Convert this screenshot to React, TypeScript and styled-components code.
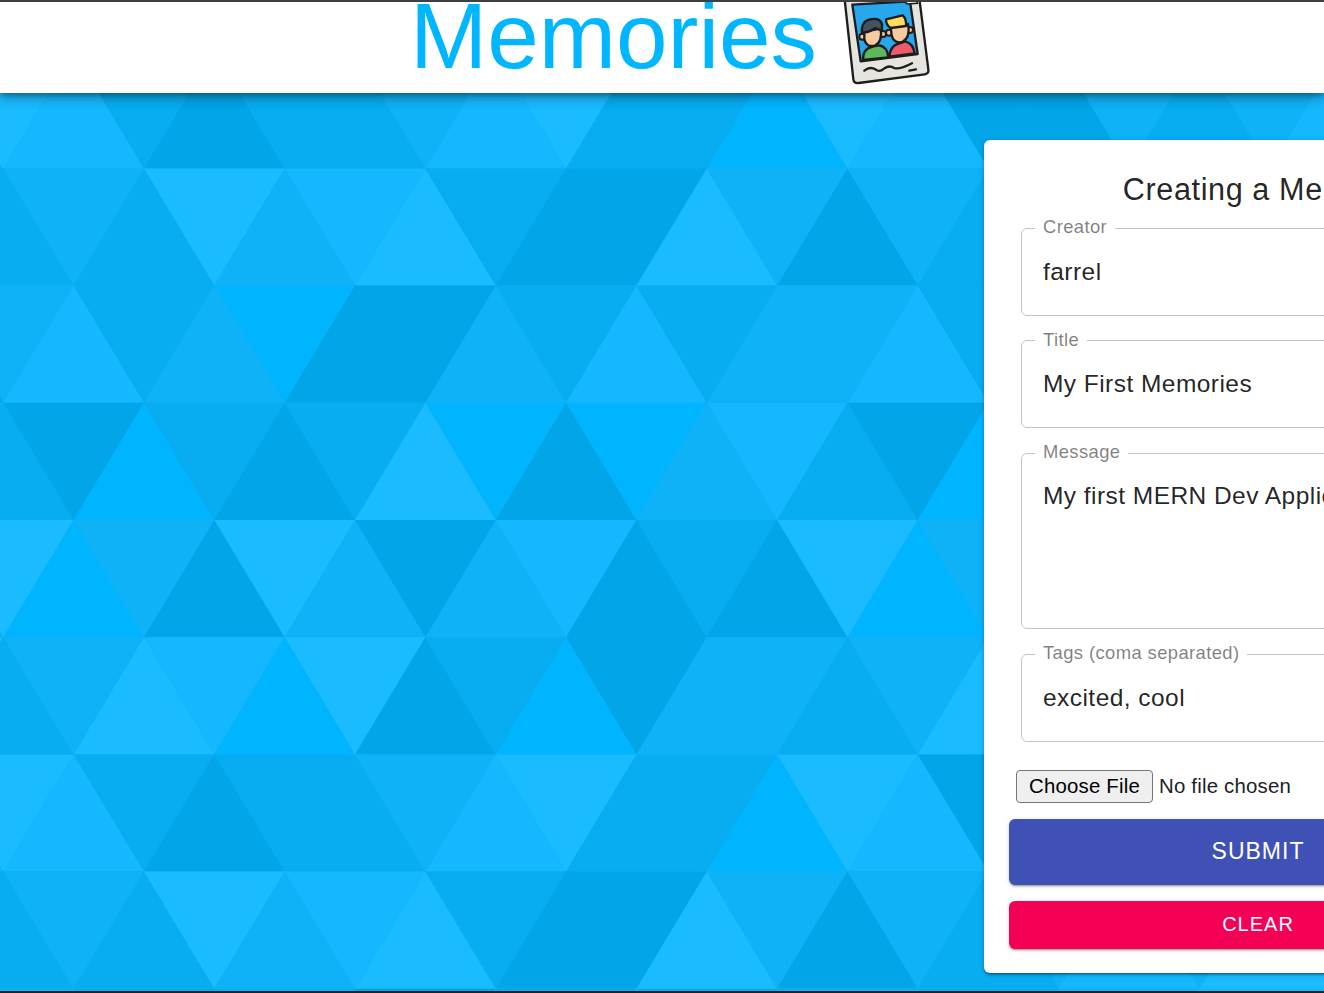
import React from "react";
import styled, { createGlobalStyle } from "styled-components";

const GlobalStyle = createGlobalStyle`
    html, body {
        margin: 0;
        padding: 0;
        background: #202124;
        overflow: hidden;
    }
`
const FONT = `"Liberation Sans", Arial, sans-serif`

// colours of the triangle texture, from light to dark
const palette: { [k: string]: string } = {
    A: "#00b5ff",
    B: "#1abbff",
    C: "#15b8fe",
    D: "#0fb1f7",
    E: "#08acf0",
    F: "#02a5e7",
}
// the texture repeats every six rows, first letter is the triangle left of x=0
const rows = [
    "ABCEFEEDCBEEABCFFDEDC",
    "EEDEBDCBEFFBDFDEDCDBB",
    "FDCEDAFFDECEDDCECDBCB",
    "AEFAEFEBAFADCEFAEDCED",
    "EBADFBDFDCFEFBADCEDCE",
    "BEDBCABFEAFDDEDBEDCBD",
]
const ROW_TOP = 51.2
const ROW_H = 117.2
const STEP = 70.35
const START_X = 3.3

const triangles = () => {
    const list: { points: string, fill: string }[] = []
    for (let r = 0; r < 9; r++) {
        const top = ROW_TOP + r * ROW_H
        const bottom = top + ROW_H
        const letters = rows[r % 6]
        letters.split("").forEach((c, n) => {
            const i = n - 1
            const mid = START_X + i * STEP
            // in even rows the even triangles point down
            const down = (((r + i) % 2) + 2) % 2 === 0
            const apex = down ? bottom : top
            const base = down ? top : bottom
            list.push({
                points: `${mid},${apex} ${mid - STEP},${base} ${mid + STEP},${base}`,
                fill: palette[c],
            })
        })
    }
    return list
}

const Page = styled.div`
    position: relative;
    box-sizing: border-box;
    width: 1324px;
    height: 993px;
    overflow: hidden;
    border-top: 2px solid #3c4043;
    border-bottom: 2px solid #202124;
    font-family: ${FONT};
`
const Backdrop = styled.svg`
    position: absolute;
    left: 0;
    top: 0;
    width: 1324px;
    height: 989px;
    background: #0cafF4;
`
const Header = styled.header`
    position: relative;
    display: flex;
    align-items: flex-start;
    box-sizing: border-box;
    height: 91px;
    padding-left: 410px;
    background: #fff;
    overflow: hidden;
    box-shadow: 0 3px 5px -1px rgba(0,0,0,.3), 0 6px 10px 0 rgba(0,0,0,.18), 0 1px 18px 0 rgba(0,0,0,.12);
`
const Title = styled.h1`
    margin: 0;
    font-size: 92.7px;
    line-height: 68px;
    font-weight: 400;
    color: #00b7ff;
    white-space: nowrap;
`
const Logo = styled.svg`
    flex: none;
    width: 130px;
    height: 91px;
    margin-left: 3px;
`
const Main = styled.main`
    position: relative;
    display: grid;
    grid-template-columns: 984px 548px;
    padding-top: 47px;
`
const Card = styled.section`
    grid-column: 2;
    box-sizing: border-box;
    height: 833px;
    padding: 25px 25px 0;
    background: #fff;
    border-radius: 6px;
    box-shadow: 0 3px 2px -2px rgba(0,0,0,.3), 0 2px 3px 0 rgba(0,0,0,.2), 0 1px 6px 0 rgba(0,0,0,.12);
`
const Heading = styled.h2`
    margin: 0;
    font-size: 30.6px;
    line-height: 49px;
    font-weight: 400;
    letter-spacing: .6px;
    text-align: center;
    color: rgba(0,0,0,.87);
`
const Form = styled.form`
    display: flex;
    flex-direction: column;
`
const Field = styled.fieldset<{ $height: number }>`
    box-sizing: border-box;
    height: ${p => p.$height}px;
    min-width: 0;
    margin: 0 12px 11px;
    padding: 0 0 0 21px;
    border: 1.5px solid rgba(0,0,0,.23);
    border-radius: 6px;
`
const Legend = styled.legend`
    margin-left: -8px;
    padding: 0 8px 2px;
    font-size: 18.4px;
    line-height: 26px;
    letter-spacing: .4px;
    color: rgba(0,0,0,.5);
`
const TextInput = styled.input`
    display: block;
    box-sizing: border-box;
    width: 100%;
    height: 59px;
    padding: 0;
    border: 0;
    outline: 0;
    background: transparent;
    font-family: ${FONT};
    font-size: 24.5px;
    letter-spacing: .45px;
    color: rgba(0,0,0,.87);
`
const TextArea = styled.textarea`
    display: block;
    box-sizing: border-box;
    width: 100%;
    height: 140px;
    padding: 14px 0 0;
    border: 0;
    outline: 0;
    resize: none;
    overflow: hidden;
    background: transparent;
    font-family: ${FONT};
    font-size: 24.5px;
    line-height: 29px;
    letter-spacing: .45px;
    color: rgba(0,0,0,.87);
`
const FileInput = styled.input`
    display: block;
    height: 33px;
    margin: 17px 0 16px 7px;
    font-family: ${FONT};
    font-size: 20.4px;
    letter-spacing: .2px;
    color: #202124;
    &::file-selector-button {
        box-sizing: border-box;
        width: 137px;
        height: 33px;
        margin-right: 6px;
        padding: 0;
        background: #efefef;
        border: 1.5px solid #767676;
        border-radius: 4px;
        font-family: ${FONT};
        font-size: 20.4px;
        letter-spacing: .2px;
        color: #000;
    }
`
const Button = styled.button<{ $color: string, $height: number, $size: number }>`
    display: block;
    width: 100%;
    height: ${p => p.$height}px;
    margin-bottom: 16px;
    padding: 0;
    border: 0;
    border-radius: 6px;
    background: ${p => p.$color};
    font-family: ${FONT};
    font-size: ${p => p.$size}px;
    letter-spacing: 1px;
    color: #fff;
    box-shadow: 0 3px 1px -2px rgba(0,0,0,.2), 0 2px 2px 0 rgba(0,0,0,.14), 0 1px 5px 0 rgba(0,0,0,.12);
`

function PhotoLogo() {
    return (
        <Logo viewBox="0 6 390 273">
            <path d="M72 -20 L100 238 Q102 251 116 249 L314 223 Q327 221 325 208 L296 -20 Z" fill="#e6e4df" stroke="#1d1d1b" strokeWidth="7" />
            <path d="M97 14 L122 184 L293 162 L270 4 Z" fill="#27a8ee" stroke="#1d1d1b" strokeWidth="7" strokeLinejoin="round" />
            <path d="M255 6 L262 12 L292 10 L288 -6 Z" fill="#f5f4f0" stroke="#1d1d1b" strokeWidth="5" />
            {/* left boy */}
            <path d="M129 180 Q128 146 158 140 L175 136 Q202 138 205 172 Z" fill="#5cb85c" stroke="#1d1d1b" strokeWidth="7" strokeLinejoin="round" />
            <circle cx="127" cy="110" r="9" fill="#f9c9a0" stroke="#1d1d1b" strokeWidth="6" />
            <circle cx="189" cy="102" r="9" fill="#f9c9a0" stroke="#1d1d1b" strokeWidth="6" />
            <path d="M133 95 L182 86 Q188 124 166 136 Q139 144 133 118 Z" fill="#f9c9a0" stroke="#1d1d1b" strokeWidth="7" />
            <path d="M126 100 Q122 64 150 58 Q180 52 186 72 L186 92 L166 84 Q150 96 133 97 Z" fill="#45535f" stroke="#1d1d1b" strokeWidth="7" strokeLinejoin="round" />
            {/* right boy */}
            <path d="M208 170 Q210 136 238 130 L255 124 Q280 130 284 160 Z" fill="#ee5a67" stroke="#1d1d1b" strokeWidth="7" strokeLinejoin="round" />
            <circle cx="207" cy="98" r="9" fill="#f9c9a0" stroke="#1d1d1b" strokeWidth="6" />
            <circle cx="270" cy="90" r="9" fill="#f9c9a0" stroke="#1d1d1b" strokeWidth="6" />
            <path d="M212 80 L264 72 Q272 112 247 126 Q221 132 215 106 Z" fill="#f9c9a0" stroke="#1d1d1b" strokeWidth="7" />
            <path d="M198 58 L248 46 Q260 56 258 78 L212 84 Q198 76 198 58 Z" fill="#ffdc5d" stroke="#1d1d1b" strokeWidth="7" strokeLinejoin="round" />
            {/* scribble on the frame */}
            <path d="M133 212 Q150 198 166 208 Q178 218 192 206 Q208 194 222 204 Q238 210 276 190" fill="none" stroke="#1d1d1b" strokeWidth="7" strokeLinecap="round" />
            <path d="M268 212 L288 208" fill="none" stroke="#1d1d1b" strokeWidth="7" strokeLinecap="round" />
        </Logo>
    )
}

export default function App() {
    return (
        <>
            <GlobalStyle />
            <Page>
                <Backdrop viewBox="0 2 1324 989">
                    {triangles().map((t, i) => (
                        <polygon key={i} points={t.points} fill={t.fill} />
                    ))}
                </Backdrop>
                <Header>
                    <Title>Memories</Title>
                    <PhotoLogo />
                </Header>
                <Main>
                    <Card>
                        <Heading>Creating a Memory</Heading>
                        <Form>
                            <Field $height={101.5}>
                                <Legend>Creator</Legend>
                                <TextInput readOnly value="farrel" />
                            </Field>
                            <Field $height={101.5}>
                                <Legend>Title</Legend>
                                <TextInput readOnly value="My First Memories" />
                            </Field>
                            <Field $height={190}>
                                <Legend>Message</Legend>
                                <TextArea readOnly value="My first MERN Dev Application" />
                            </Field>
                            <Field $height={101.5}>
                                <Legend>Tags (coma separated)</Legend>
                                <TextInput readOnly value="excited, cool" />
                            </Field>
                            <FileInput type="file" />
                            <Button type="button" $color="#3f51b5" $height={66} $size={23}>SUBMIT</Button>
                            <Button type="button" $color="#f50057" $height={48} $size={20}>CLEAR</Button>
                        </Form>
                    </Card>
                </Main>
            </Page>
        </>
    )
}
